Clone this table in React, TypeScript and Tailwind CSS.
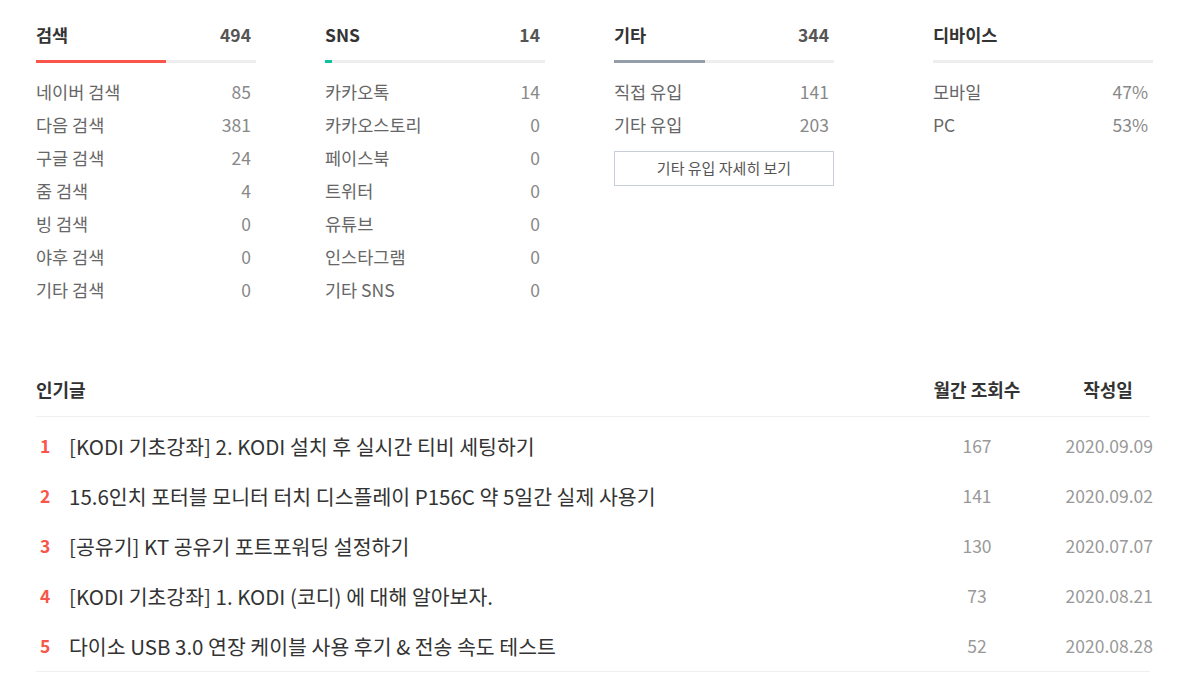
import React from "react";

const font = { fontFamily: '"Noto Sans CJK KR", "Noto Sans", sans-serif' };

type Row = { label: string; value: string };
type Stat = {
  title: string;
  total?: string;
  bar: string;
  fill: string;
  rows: Row[];
  button?: string;
};

const stats: Stat[] = [
  {
    title: "검색",
    total: "494",
    bar: "bg-[#f9554a]",
    fill: "w-[130px]",
    rows: [
      { label: "네이버 검색", value: "85" },
      { label: "다음 검색", value: "381" },
      { label: "구글 검색", value: "24" },
      { label: "줌 검색", value: "4" },
      { label: "빙 검색", value: "0" },
      { label: "야후 검색", value: "0" },
      { label: "기타 검색", value: "0" },
    ],
  },
  {
    title: "SNS",
    total: "14",
    bar: "bg-[#10c0a0]",
    fill: "w-[7px]",
    rows: [
      { label: "카카오톡", value: "14" },
      { label: "카카오스토리", value: "0" },
      { label: "페이스북", value: "0" },
      { label: "트위터", value: "0" },
      { label: "유튜브", value: "0" },
      { label: "인스타그램", value: "0" },
      { label: "기타 SNS", value: "0" },
    ],
  },
  {
    title: "기타",
    total: "344",
    bar: "bg-[#959da8]",
    fill: "w-[91px]",
    rows: [
      { label: "직접 유입", value: "141" },
      { label: "기타 유입", value: "203" },
    ],
    button: "기타 유입 자세히 보기",
  },
  {
    title: "디바이스",
    bar: "bg-transparent",
    fill: "w-0",
    rows: [
      { label: "모바일", value: "47%" },
      { label: "PC", value: "53%" },
    ],
  },
];

const posts = [
  { title: "[KODI 기초강좌] 2. KODI 설치 후 실시간 티비 세팅하기", views: "167", date: "2020.09.09" },
  { title: "15.6인치 포터블 모니터 터치 디스플레이 P156C 약 5일간 실제 사용기", views: "141", date: "2020.09.02" },
  { title: "[공유기] KT 공유기 포트포워딩 설정하기", views: "130", date: "2020.07.07" },
  { title: "[KODI 기초강좌] 1. KODI (코디) 에 대해 알아보자.", views: "73", date: "2020.08.21" },
  { title: "다이소 USB 3.0 연장 케이블 사용 후기 & 전송 속도 테스트", views: "52", date: "2020.08.28" },
];

function StatColumn({ s }: { s: Stat }) {
  return (
    <div className="w-[220px]">
      <div className="flex items-center justify-between h-[38px]">
        <span className="text-[17.5px] font-bold text-[#333]">{s.title}</span>
        <span className="text-[17.5px] font-bold text-[#555] pr-[5px]">{s.total}</span>
      </div>
      <div className="h-[3px] bg-[#eeeeee] mt-[6px]">
        <div className={`h-[3px] ${s.bar} ${s.fill}`} />
      </div>
      <ul className="mt-[13px]">
        {s.rows.map((r) => (
          <li key={r.label} className="flex justify-between h-[33px] items-center text-[17.5px]">
            <span className="text-[#666]">{r.label}</span>
            <span className="text-[#888] pr-[5px]">{r.value}</span>
          </li>
        ))}
      </ul>
      {s.button && (
        <button className="mt-[9px] w-[220px] h-[35px] border border-[#c8cfd9] text-[15px] text-[#555] bg-white">
          {s.button}
        </button>
      )}
    </div>
  );
}

export default function App() {
  return (
    <div className="w-[1188px] h-[685px] bg-white overflow-hidden" style={font}>
      <div className="flex items-start pl-[36px] pt-[16px]">
        <div className="flex items-start gap-[69px]">
          {stats.slice(0, 3).map((s) => (
            <StatColumn key={s.title} s={s} />
          ))}
        </div>
        <div className="ml-[99px]">
          <StatColumn s={stats[3]} />
        </div>
      </div>

      <div className="mx-[36px] mt-[55px] w-[1114px]">
        <div className="flex items-center h-[55px] border-b border-[#f0f0f0] text-[18px] font-bold text-[#333]">
          <span className="flex-1">인기글</span>
          <span className="w-[100px] text-center mr-[36px]">월간 조회수</span>
          <span className="w-[90px] text-center mr-[-3px]">작성일</span>
        </div>
        <ul className="pt-[4px] border-b border-[#f0f0f0]">
          {posts.map((p, i) => (
            <li key={p.title} className="flex items-center h-[50px]">
              <span className="w-[33px] pl-[4px] text-[17.5px] font-bold text-[#f9554a]">{i + 1}</span>
              <span className="flex-1 text-[20.5px] text-[#333]">{p.title}</span>
              <span className="w-[100px] text-center mr-[36px] text-[17.5px] text-[#999]">{p.views}</span>
              <span className="w-[90px] text-right text-[17.5px] text-[#999] mr-[-3px]">{p.date}</span>
            </li>
          ))}
        </ul>
      </div>
    </div>
  );
}
